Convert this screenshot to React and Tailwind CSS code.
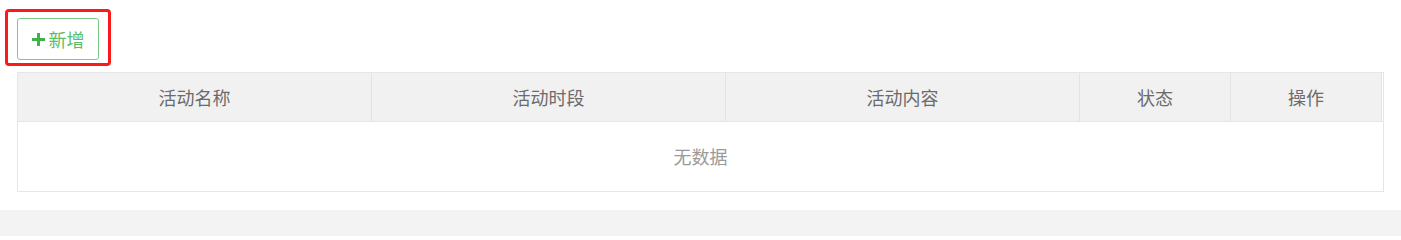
const columns = [
  { title: "活动名称", width: "w-[354px]" },
  { title: "活动时段", width: "w-[354px]" },
  { title: "活动内容", width: "w-[354px]" },
  { title: "状态", width: "w-[151px]" },
  { title: "操作", width: "w-[151px]" },
];

export default function App() {
  return (
    <div
      className="w-full bg-white"
      style={{ fontFamily: '"Noto Sans CJK SC", "Liberation Sans", sans-serif' }}
    >
      <div className="pt-[9px]">
        {/* highlighted toolbar */}
        <div className="ml-[5px] inline-block rounded-[4px] border-[3px] border-[#fb1a1a] pl-[9px] pr-[9px] pt-[6px] pb-[3px]">
          <button className="flex h-[42px] w-[82px] items-center justify-center gap-[4px] rounded-[3px] border border-[#7acb84] bg-white text-[18px] leading-none text-[#5bbd65]">
            <svg width="13" height="13" viewBox="0 0 13 13">
              <path d="M5 0h3v5h5v3H8v5H5V8H0V5h5z" fill="#3fb24b" />
            </svg>
            <span>新增</span>
          </button>
        </div>

        {/* table */}
        <div className="mx-[17px] mt-[6px] border border-[#e6e6e6]">
          <div className="flex h-[49px] border-b border-[#e6e6e6] bg-[#f1f1f1] text-[18px] text-[#6b6b6b]">
            {columns.map((c) => (
              <div
                key={c.title}
                className={`${c.width} flex items-center justify-center border-r border-[#e3e3e3]`}
              >
                {c.title}
              </div>
            ))}
            <div className="flex-1 bg-white" />
          </div>
          <div className="flex h-[69px] items-center justify-center text-[18px] text-[#9a9a9a]">
            无数据
          </div>
        </div>
      </div>
      <div className="mt-[18px] h-[26px] bg-[#f3f3f3]" />
    </div>
  );
}
